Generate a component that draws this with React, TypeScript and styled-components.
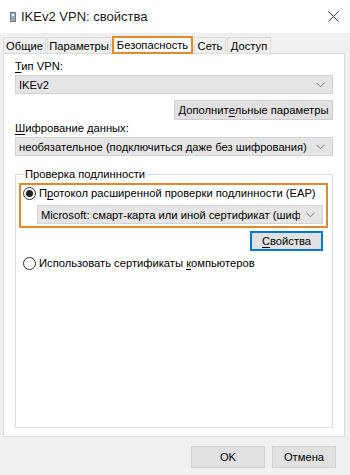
import React from 'react';
import styled, { createGlobalStyle } from 'styled-components';

const Global = createGlobalStyle`
  html, body {
    margin: 0;
    padding: 0;
    background: #f0f0f0;
  }
  body {
    font-family: "Liberation Sans", Arial, sans-serif;
    font-size: 11.2px;
    color: #000;
  }
`;

const Window = styled.div`
  width: 350px;
  height: 475px;
  display: flex;
  flex-direction: column;
  background: #f0f0f0;
  overflow: hidden;
`;

const TitleBar = styled.div`
  height: 33px;
  flex: 0 0 auto;
  background: #fff;
  display: flex;
  align-items: center;
  padding: 0 0 0 10px;
  font-size: 13px;
  color: #1a1a1a;
`;

const TitleText = styled.span`
  flex: 1;
  margin-left: 5px;
`;

const CloseButton = styled.div`
  width: 34px;
  height: 33px;
  display: flex;
  align-items: center;
  justify-content: center;
`;

const Body = styled.div`
  flex: 1;
  display: flex;
  flex-direction: column;
  padding: 3px 5px 0 3px;
  min-height: 0;
`;

const TabStrip = styled.div`
  display: flex;
  align-items: flex-end;
  height: 17px;
  flex: 0 0 auto;
`;

const Tab = styled.div<{ $active?: boolean; $w: number }>`
  width: ${p => p.$w}px;
  height: ${p => (p.$active ? '18px' : '16px')};
  box-sizing: border-box;
  margin-right: 1px;
  margin-bottom: ${p => (p.$active ? '-1px' : '0')};
  display: flex;
  align-items: center;
  justify-content: center;
  background: ${p => (p.$active ? '#fff' : '#f0f0f0')};
  border: ${p => (p.$active ? '2px solid #e4882c' : '1px solid #dcdcdc')};
  border-bottom: ${p => (p.$active ? '2px solid #e4882c' : 'none')};
  white-space: nowrap;
  position: relative;
  z-index: ${p => (p.$active ? 1 : 0)};
`;

const Panel = styled.div`
  flex: 0 0 384px;
  box-sizing: border-box;
  background: #fff;
  border: 1px solid #dcdcdc;
  padding: 4px 11px 0 11px;
  display: flex;
  flex-direction: column;
  min-width: 0;
`;

const Label = styled.div`
  height: 16px;
  line-height: 16px;
  margin-bottom: 1px;
`;

const Key = styled.span`
  text-decoration: underline;
  text-underline-offset: 2px;
`;

const Select = styled.div`
  box-sizing: border-box;
  height: 19px;
  width: 100%;
  min-width: 0;
  background: #e5e5e5;
  border: 1px solid #d4d4d4;
  display: flex;
  align-items: center;
  padding: 0 7px 0 3px;
  overflow: hidden;
`;

const SelectText = styled.span`
  flex: 1;
  min-width: 0;
  white-space: nowrap;
  overflow: hidden;
`;

const Chevron = () => (
  <svg width="9" height="6" viewBox="0 0 9 6" style={{ flex: '0 0 auto', marginLeft: 6 }}>
    <path d="M0.5 0.8 L4.5 4.8 L8.5 0.8" fill="none" stroke="#777" strokeWidth="1" />
  </svg>
);

const Button = styled.div<{ $focused?: boolean; $width: number; $height?: number }>`
  box-sizing: border-box;
  width: ${p => p.$width}px;
  height: ${p => p.$height ?? 20}px;
  background: #e1e1e1;
  border: 1px solid ${p => (p.$focused ? '#0078d7' : '#cfcfcf')};
  box-shadow: ${p => (p.$focused ? 'inset 0 0 0 1px #0078d7' : 'none')};
  display: flex;
  align-items: center;
  justify-content: center;
  white-space: nowrap;
`;

const RightRow = styled.div<{ $top: number; $right?: number }>`
  display: flex;
  justify-content: flex-end;
  margin-top: ${p => p.$top}px;
  padding-right: ${p => p.$right ?? 0}px;
`;

const Group = styled.fieldset`
  margin: 11px 0 0 0;
  padding: 0 4px 0 3px;
  border: 1px solid #dcdcdc;
  height: 261px;
  min-width: 0;
  box-sizing: border-box;
  display: flex;
  flex-direction: column;
`;

const Legend = styled.legend`
  padding: 0 1px;
  margin-left: 5px;
  line-height: 14px;
`;

const Highlight = styled.div`
  border: 2px solid #e4882c;
  padding: 0 3px 2px 2px;
  display: flex;
  flex-direction: column;
  gap: 4px;
  margin-top: 2px;
  min-width: 0;
  overflow: hidden;
`;

const RadioRow = styled.div<{ $top?: number; $left?: number }>`
  display: flex;
  align-items: center;
  height: 16px;
  white-space: nowrap;
  margin-top: ${p => p.$top ?? 0}px;
  padding-left: ${p => p.$left ?? 0}px;
`;

const RadioCircle = styled.span<{ $checked?: boolean }>`
  width: 13px;
  height: 13px;
  box-sizing: border-box;
  border-radius: 50%;
  border: 1px solid #333;
  margin-right: 3px;
  display: flex;
  align-items: center;
  justify-content: center;
  &::after {
    content: '';
    width: 7px;
    height: 7px;
    border-radius: 50%;
    background: ${p => (p.$checked ? '#222' : 'transparent')};
  }
`;

const Indent = styled.div`
  padding-left: 14px;
  min-width: 0;
`;

const Footer = styled.div`
  flex: 1;
  display: flex;
  justify-content: flex-end;
  align-items: flex-start;
  gap: 7px;
  padding: 9px 9px 0 0;
`;

export default function App() {
  return (
    <>
      <Global />
      <Window>
        <TitleBar>
          <svg width="6" height="10" viewBox="0 0 6 10">
            <rect x="0.5" y="0.5" width="5" height="9" fill="#9aa9b8" stroke="#6c7c8c" />
            <rect x="1.5" y="2" width="3" height="2" fill="#dfe7ee" />
          </svg>
          <TitleText>IKEv2 VPN: свойства</TitleText>
          <CloseButton>
            <svg width="11" height="11" viewBox="0 0 11 11">
              <path d="M0.5 0.5 L10.5 10.5 M10.5 0.5 L0.5 10.5" stroke="#444" strokeWidth="1" />
            </svg>
          </CloseButton>
        </TitleBar>
        <Body>
          <TabStrip>
            <Tab $w={43}>Общие</Tab>
            <Tab $w={64}>Параметры</Tab>
            <Tab $w={81} $active>Безопасность</Tab>
            <Tab $w={32}>Сеть</Tab>
            <Tab $w={44}>Доступ</Tab>
          </TabStrip>
          <Panel>
            <Label><Key>Т</Key>ип VPN:</Label>
            <Select>
              <SelectText>IKEv2</SelectText>
              <Chevron />
            </Select>
            <RightRow $top={6}>
              <Button $width={159}>Дополнит<Key>е</Key>льные параметры</Button>
            </RightRow>
            <Label><Key>Ш</Key>ифрование данных:</Label>
            <Select>
              <SelectText>необязательное (подключиться даже без шифрования)</SelectText>
              <Chevron />
            </Select>
            <Group>
              <Legend>Проверка подлинности</Legend>
              <Highlight>
                <RadioRow>
                  <RadioCircle $checked />
                  П<Key>р</Key>отокол расширенной проверки подлинности (EAP)
                </RadioRow>
                <Indent>
                  <Select>
                    <SelectText>Microsoft: смарт-карта или иной сертификат (шифрование включено)</SelectText>
                    <Chevron />
                  </Select>
                </Indent>
              </Highlight>
              <RightRow $top={3} $right={5}>
                <Button $width={73} $focused><Key>С</Key>войства</Button>
              </RightRow>
              <RadioRow $top={4} $left={4}>
                <RadioCircle />
                Использовать сертификаты&nbsp;<Key>к</Key>омпьютеров
              </RadioRow>
            </Group>
          </Panel>
          <Footer>
            <Button $width={74} $height={22}>OK</Button>
            <Button $width={64} $height={22}>Отмена</Button>
          </Footer>
        </Body>
      </Window>
    </>
  );
}
